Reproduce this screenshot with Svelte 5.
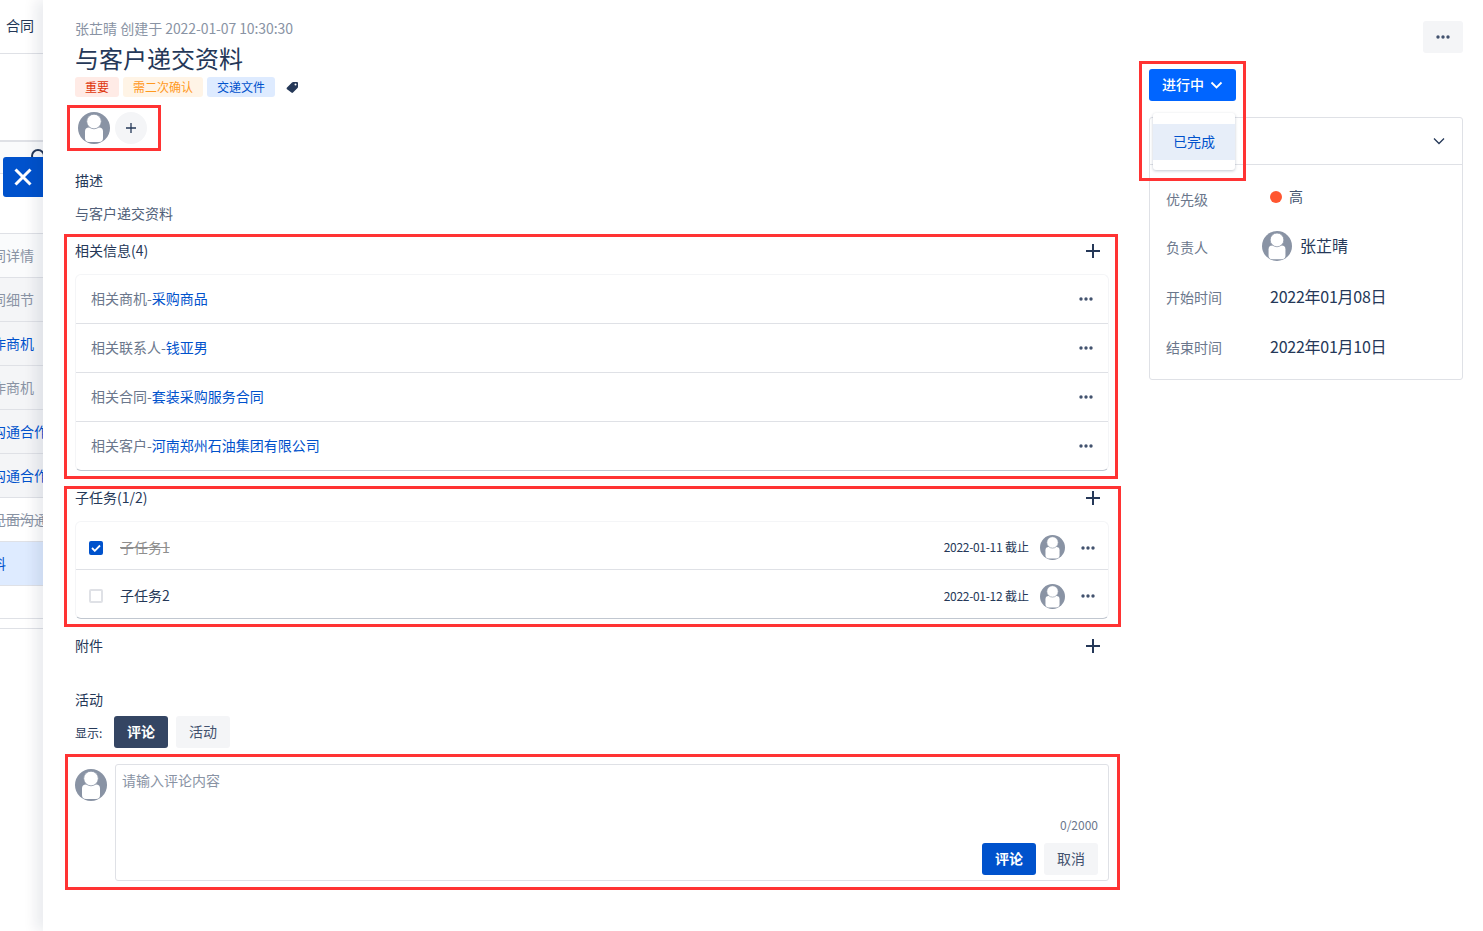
<script>
	const related = [
		{ label: "相关商机-", link: "采购商品" },
		{ label: "相关联系人-", link: "钱亚男" },
		{ label: "相关合同-", link: "套装采购服务合同" },
		{ label: "相关客户-", link: "河南郑州石油集团有限公司" },
	];

	const subtasks = [
		{ name: "子任务1", date: "2022-01-11", done: true },
		{ name: "子任务2", date: "2022-01-12", done: false },
	];

	const sideRows = [
		{ cls: "plain", text: "同详情" },
		{ cls: "grey", text: "同细节" },
		{ cls: "link", text: "作商机" },
		{ cls: "grey", text: "作商机" },
		{ cls: "link", text: "沟通合作" },
		{ cls: "link", text: "沟通合作" },
		{ cls: "strike", text: "见面沟通" },
		{ cls: "active", text: "料" },
	];
</script>

{#snippet avatar(size)}
	<svg class="avatar" width={size} height={size} viewBox="0 0 32 32">
		<defs>
			<clipPath id="avatar-clip"><circle cx="16" cy="16" r="16" /></clipPath>
		</defs>
		<circle cx="16" cy="16" r="16" fill="#8993a4" />
		<rect x="7" y="15.500" width="18" height="14.500" rx="4" fill="#fff" clip-path="url(#avatar-clip)" />
		<circle cx="16" cy="9.500" r="7.300" fill="#fff" stroke="#8993a4" stroke-width="0.800" />
	</svg>
{/snippet}

{#snippet dots()}
	<svg class="dots" width="14" height="4" viewBox="0 0 14 4">
		<circle cx="2" cy="2" r="1.700" />
		<circle cx="7" cy="2" r="1.700" />
		<circle cx="12" cy="2" r="1.700" />
	</svg>
{/snippet}

{#snippet plus()}
	<svg class="plus" width="14" height="14" viewBox="0 0 14 14">
		<path d="M7 0v14M0 7h14" fill="none" stroke="#253858" stroke-width="2" />
	</svg>
{/snippet}

<div class="page">
	<aside class="behind">
		<div class="tab">合同</div>
		<div class="top-gap">
			<div class="search-strip">
				<span class="search-ring"></span>
				<div class="close-btn">
					<svg width="20" height="20" viewBox="0 0 20 20">
						<path d="M2.500 2.500l15 15M17.500 2.500l-15 15" fill="none" stroke="#fff" stroke-width="3" />
					</svg>
				</div>
			</div>
		</div>
		<div class="side-list">
			{#each sideRows as row}
				<div class="side-row {row.cls}"><span>{row.text}</span></div>
			{/each}
		</div>
		<div class="side-foot"></div>
	</aside>

	<main class="drawer">
		<div class="content">
			<div class="created">张芷晴 创建于 <span class="stamp">2022-01-07 10:30:30</span></div>
			<h1>与客户递交资料</h1>
			<div class="tags">
				<span class="tag red">重要</span>
				<span class="tag orange">需二次确认</span>
				<span class="tag blue">交递文件</span>
				<svg class="tag-icon" width="13" height="12" viewBox="0 0 13 12">
					<path d="M1 6.500 6 1.500Q6.500 1 7.200 1H11q1 0 1 1v3.800q0 .7-.5 1.200l-4.500 4.500q-.8.800-1.600 0L1 8.200q-.8-.8 0-1.700z" fill="#253858" />
					<circle cx="9.500" cy="3.500" r="1" fill="#fff" />
				</svg>
			</div>
			<div class="members">
				{@render avatar(32)}
				<div class="add-member">
					<svg width="12" height="12" viewBox="0 0 12 12">
						<path d="M6 1v10M1 6h10" fill="none" stroke="#253858" stroke-width="1.300" />
					</svg>
				</div>
			</div>

			<div class="label desc-title">描述</div>
			<div class="label desc">与客户递交资料</div>

			<section class="block related">
				<div class="block-head">
					<span>相关信息(4)</span>
					{@render plus()}
				</div>
				<div class="card">
					{#each related as item}
						<div class="rel-row">
							<span class="rel-text">{item.label}<span class="rel-link">{item.link}</span></span>
							{@render dots()}
						</div>
					{/each}
				</div>
			</section>

			<section class="block subtasks">
				<div class="block-head">
					<span>子任务(1/2)</span>
					{@render plus()}
				</div>
				<div class="card">
					{#each subtasks as task}
						<div class="task-row">
							<span class="check" class:on={task.done}>
								{#if task.done}
									<svg width="10" height="8" viewBox="0 0 10 8">
										<path d="M1 4l2.800 2.800L9 1.500" fill="none" stroke="#fff" stroke-width="1.800" />
									</svg>
								{/if}
							</span>
							<span class="task-name" class:done={task.done}>{task.name}</span>
							<span class="due"><span class="due-date">{task.date}</span> 截止</span>
							{@render avatar(25)}
							{@render dots()}
						</div>
					{/each}
				</div>
			</section>

			<div class="block-head attach">
				<span>附件</span>
				{@render plus()}
			</div>

			<div class="label activity-title">活动</div>
			<div class="show-row">
				<span class="show-label">显示:</span>
				<button class="pill dark">评论</button>
				<button class="pill">活动</button>
			</div>

			<div class="comment">
				<div class="comment-avatar">{@render avatar(32)}</div>
				<div class="comment-box">
					<div class="placeholder">请输入评论内容</div>
					<div class="counter">0/2000</div>
					<div class="comment-actions">
						<button class="btn primary">评论</button>
						<button class="btn">取消</button>
					</div>
				</div>
			</div>
		</div>

		<div class="right">
			<div class="more-wrap">
				<button class="more-btn">{@render dots()}</button>
			</div>
			<div class="status-area">
				<button class="status-btn">
					进行中
					<svg width="13" height="8" viewBox="0 0 13 8">
						<path d="M1.500 1.500l5 5 5-5" fill="none" stroke="#fff" stroke-width="1.800" />
					</svg>
				</button>
				<div class="menu"><div class="menu-item">已完成</div></div>
			</div>
			<div class="panel">
				<div class="panel-head">
					<svg width="12" height="8" viewBox="0 0 12 8">
						<path d="M1 1.500l5 5 5-5" fill="none" stroke="#253858" stroke-width="1.300" />
					</svg>
				</div>
				<div class="panel-body">
					<div class="p-row priority-row">
						<span class="p-label">优先级</span>
						<span class="p-val priority"><i class="dot"></i><span>高</span></span>
					</div>
					<div class="p-row owner-row">
						<span class="p-label">负责人</span>
						<span class="p-val person">{@render avatar(30)}<span>张芷晴</span></span>
					</div>
					<div class="p-row start-row">
						<span class="p-label">开始时间</span>
						<span class="p-val date">2022年01月08日</span>
					</div>
					<div class="p-row">
						<span class="p-label">结束时间</span>
						<span class="p-val date">2022年01月10日</span>
					</div>
				</div>
			</div>
		</div>
	</main>

	<!-- red annotation boxes drawn over the screenshot -->
	<div class="mark m1"></div>
	<div class="mark m2"></div>
	<div class="mark m3"></div>
	<div class="mark m4"></div>
	<div class="mark m5"></div>
</div>

<style>
	:global(body) {
		margin: 0;
		background: #fff;
	}

	.page {
		position: relative;
		display: flex;
		width: 1483px;
		height: 931px;
		overflow: hidden;
		font-family: "Noto Sans CJK SC", "Noto Sans", sans-serif;
		font-size: 14px;
		color: #253858;
	}

	button {
		font-family: inherit;
		border: none;
		padding: 0 0 2px;
	}

	/* page behind the drawer */
	.behind {
		width: 43px;
		flex: none;
		display: flex;
		flex-direction: column;
		overflow: hidden;
	}

	.tab {
		height: 54px;
		padding-top: 15px;
		box-sizing: border-box;
		border-bottom: 1px solid #dfe1e6;
		padding-left: 6px;
		line-height: 20px;
	}

	.top-gap {
		height: 179px;
		padding-top: 86px;
		box-sizing: border-box;
	}

	.search-strip {
		position: relative;
		height: 31px;
		border-top: 2px solid #dfe1e6;
		border-bottom: 1px solid #dfe1e6;
		background: #fafbfc;
	}

	.search-ring {
		position: absolute;
		left: 31px;
		top: 7px;
		width: 10px;
		height: 10px;
		border: 2px solid #253858;
		border-radius: 50%;
	}

	.close-btn {
		position: absolute;
		left: 3px;
		top: 15px;
		width: 40px;
		height: 40px;
		background: #0052cc;
		border-radius: 3px 0 0 3px;
		display: flex;
		align-items: center;
		justify-content: center;
	}

	.side-row {
		width: 43px;
		height: 44px;
		box-sizing: border-box;
		border-top: 1px solid #dfe1e6;
		display: flex;
		align-items: center;
		overflow: hidden;
		white-space: nowrap;
		background: #f4f5f7;
		color: #8993a4;
	}

	.side-row span {
		margin-left: -8px;
		padding-bottom: 2px;
	}

	.side-row.plain {
		background: #fafbfc;
	}

	.side-row.link {
		color: #0052cc;
	}

	.side-row.strike {
		background: #fff;
		text-decoration: line-through;
	}

	.side-row.active {
		height: 45px;
		border-bottom: 1px solid #dfe1e6;
		background: #deebff;
		color: #0052cc;
	}

	.side-foot {
		height: 11px;
		box-sizing: border-box;
		border-top: 1px solid #dfe1e6;
		border-bottom: 1px solid #dfe1e6;
		margin-top: 32px;
	}

	/* drawer */
	.drawer {
		flex: 1;
		display: flex;
		background: #fff;
		box-shadow: -8px 0 12px rgba(9, 30, 66, 0.08);
		z-index: 1;
	}

	.content {
		width: 1034px;
		margin-left: 32px;
		flex: none;
		display: flex;
		flex-direction: column;
	}

	.created {
		margin-top: 19px;
		line-height: 18px;
		color: #8993a4;
	}

	.stamp {
		letter-spacing: -0.1px;
	}

	h1 {
		margin: 4px 0 0;
		font-size: 24px;
		font-weight: 400;
		line-height: 34px;
	}

	.tags {
		display: flex;
		align-items: center;
		gap: 4px;
		height: 20px;
		margin-top: 2px;
	}

	.tag {
		font-size: 12px;
		line-height: 20px;
		padding: 0 10px;
		border-radius: 3px;
	}

	.tag.red {
		background: #ffebe6;
		color: #de350b;
	}

	.tag.orange {
		background: #fff4e6;
		color: #ff991f;
	}

	.tag.blue {
		background: #deebff;
		color: #0052cc;
	}

	.tag-icon {
		margin-left: 7px;
	}

	.members {
		display: flex;
		align-items: center;
		gap: 5px;
		margin: 15px 0 0 3px;
	}

	.add-member {
		width: 32px;
		height: 32px;
		border-radius: 50%;
		background: #f4f5f7;
		display: flex;
		align-items: center;
		justify-content: center;
	}

	.avatar {
		flex: none;
		display: block;
	}

	.label {
		line-height: 18px;
		padding-bottom: 2px;
	}

	.desc-title {
		margin-top: 27px;
	}

	.desc {
		margin-top: 13px;
		color: #505f79;
	}

	.block-head {
		display: flex;
		align-items: center;
		justify-content: space-between;
		padding-right: 10px;
	}

	.block-head span {
		line-height: 18px;
		padding-bottom: 2px;
	}

	.plus {
		flex: none;
		margin-right: -1px;
	}

	.related {
		margin-top: 17px;
	}

	.card {
		width: 1034px;
		box-sizing: border-box;
		margin-top: 13px;
		border-radius: 6px;
		border: 1px solid #f4f5f7;
		border-bottom: 1px solid #c1c7d0;
		background: #fff;
	}

	.rel-row {
		height: 49px;
		box-sizing: border-box;
		display: flex;
		align-items: center;
		justify-content: space-between;
		padding: 0 15px;
		border-bottom: 1px solid #dfe1e6;
	}

	.rel-row:last-child {
		height: 48px;
		border-bottom: none;
	}

	.rel-text {
		padding-bottom: 2px;
		color: #6b778c;
	}

	.rel-link {
		color: #0052cc;
	}

	.dots {
		flex: none;
		fill: #42526e;
	}

	.subtasks {
		margin-top: 17px;
	}

	.task-row {
		height: 48px;
		box-sizing: border-box;
		display: flex;
		align-items: center;
		padding: 4px 13px 0;
		border-bottom: 1px solid #dfe1e6;
	}

	.task-row:last-child {
		border-bottom: none;
	}

	.check {
		width: 14px;
		height: 14px;
		box-sizing: border-box;
		border: 2px solid #dfe1e6;
		border-radius: 2px;
		display: flex;
		align-items: center;
		justify-content: center;
		margin-right: 17px;
	}

	.check.on {
		background: #0052cc;
		border-color: #0052cc;
	}

	.task-name {
		flex: 1;
		padding-bottom: 2px;
	}

	.task-name.done {
		color: #8e8e8e;
		text-decoration: line-through;
	}

	.due {
		font-size: 12px;
		margin-right: 11px;
		padding-bottom: 2px;
	}

	.due-date {
		letter-spacing: -0.3px;
	}

	.task-row .dots {
		margin-left: 16px;
	}

	.attach {
		margin-top: 17px;
	}

	.activity-title {
		margin-top: 34px;
	}

	.show-row {
		display: flex;
		align-items: center;
		gap: 8px;
		margin-top: 6px;
	}

	.show-label {
		width: 31px;
		font-size: 12px;
	}

	.pill {
		width: 54px;
		height: 32px;
		border-radius: 3px;
		background: #f4f5f7;
		color: #42526e;
		font-size: 14px;
	}

	.pill.dark {
		background: #344563;
		color: #fff;
		font-weight: 600;
	}

	.comment {
		display: flex;
		gap: 8px;
		margin-top: 16px;
	}

	.comment-avatar {
		padding-top: 5px;
	}

	.comment-box {
		flex: 1;
		height: 117px;
		box-sizing: border-box;
		border: 1px solid #dfe1e6;
		border-radius: 3px;
		padding: 5px 10px 5px 6px;
		display: flex;
		flex-direction: column;
	}

	.placeholder {
		line-height: 20px;
		color: #8993a4;
	}

	.counter {
		margin-top: 26px;
		text-align: right;
		font-size: 12px;
		line-height: 18px;
		color: #6b778c;
	}

	.comment-actions {
		display: flex;
		justify-content: flex-end;
		gap: 8px;
		margin-top: 9px;
	}

	.btn {
		width: 54px;
		height: 32px;
		border-radius: 3px;
		background: #f4f5f7;
		color: #42526e;
		font-size: 14px;
	}

	.btn.primary {
		background: #0052cc;
		color: #fff;
		font-weight: 600;
	}

	/* right column */
	.right {
		width: 314px;
		margin-left: 40px;
		flex: none;
	}

	.more-wrap {
		display: flex;
		justify-content: flex-end;
		padding-top: 21px;
	}

	.more-btn {
		width: 40px;
		height: 32px;
		padding: 0;
		background: #f4f5f7;
		border-radius: 3px;
		display: flex;
		align-items: center;
		justify-content: center;
	}

	.status-area {
		position: relative;
		margin-top: 16px;
		height: 32px;
	}

	.status-btn {
		width: 87px;
		height: 32px;
		background: #0065ff;
		color: #fff;
		border-radius: 3px;
		font-size: 14px;
		font-weight: 500;
		display: flex;
		align-items: center;
		justify-content: center;
		gap: 6px;
	}

	.status-btn svg {
		margin-top: 2px;
	}

	.menu {
		position: absolute;
		z-index: 2;
		left: 4px;
		top: 44px;
		width: 82px;
		box-sizing: border-box;
		padding: 11px 0 10px;
		background: #fff;
		border-radius: 3px;
		box-shadow: 0 1px 3px rgba(9, 30, 66, 0.25);
	}

	.menu-item {
		height: 36px;
		box-sizing: border-box;
		line-height: 34px;
		padding-bottom: 2px;
		text-align: center;
		background: #e7eef9;
		color: #0052cc;
	}

	.panel {
		margin-top: 16px;
		height: 263px;
		box-sizing: border-box;
		border: 1px solid #dfe1e6;
		border-radius: 3px;
	}

	.panel-head {
		height: 47px;
		box-sizing: border-box;
		border-bottom: 1px solid #dfe1e6;
		display: flex;
		align-items: center;
		justify-content: flex-end;
		padding-right: 17px;
	}

	.panel-body {
		padding: 8px 16px 0;
	}

	.p-row {
		display: flex;
		align-items: center;
		height: 50px;
	}

	.priority-row {
		height: 48px;
	}

	.start-row {
		margin-top: 1px;
	}

	.p-label {
		width: 104px;
		flex: none;
		color: #6b778c;
	}

	.priority-row .p-label {
		padding-top: 4px;
	}

	.owner-row .p-label {
		padding-top: 2px;
	}

	.p-val {
		display: flex;
		align-items: center;
	}

	.priority {
		color: #42526e;
	}

	.priority span,
	.person span {
		padding-bottom: 2px;
	}

	.dot {
		width: 12px;
		height: 12px;
		border-radius: 50%;
		background: #ff5630;
		margin-right: 7px;
	}

	.person {
		margin-left: -8px;
		gap: 8px;
		font-size: 16px;
	}

	.date {
		font-size: 16px;
		letter-spacing: -0.25px;
		padding-bottom: 2px;
	}

	/* annotations */
	.mark {
		position: absolute;
		box-sizing: border-box;
		border: 3px solid #ff3333;
		z-index: 3;
		pointer-events: none;
	}

	.m1 {
		left: 67px;
		top: 105px;
		width: 94px;
		height: 46px;
	}

	.m2 {
		left: 64px;
		top: 234px;
		width: 1054px;
		height: 245px;
	}

	.m3 {
		left: 64px;
		top: 486px;
		width: 1057px;
		height: 141px;
	}

	.m4 {
		left: 65px;
		top: 754px;
		width: 1055px;
		height: 136px;
	}

	.m5 {
		left: 1139px;
		top: 61px;
		width: 107px;
		height: 120px;
	}
</style>
